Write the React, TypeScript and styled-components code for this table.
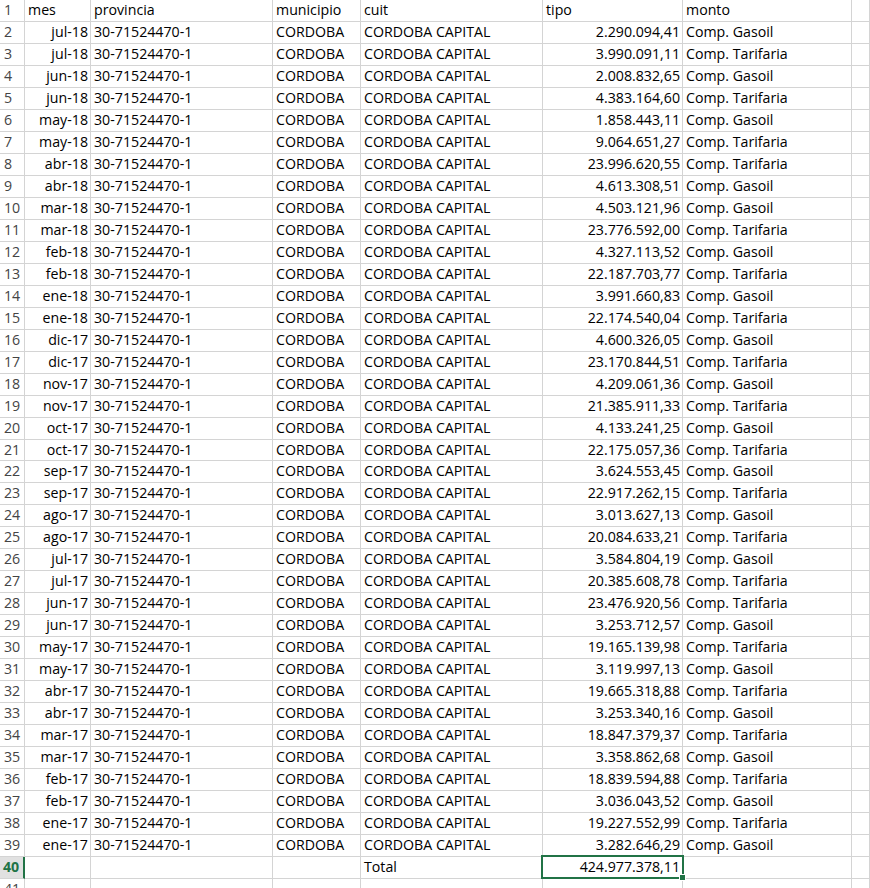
import React from "react";
import styled, { createGlobalStyle, css } from "styled-components";

const Global = createGlobalStyle`
  html, body { margin: 0; padding: 0; background: #fff; }
  body { width: 870px; height: 888px; overflow: hidden; }
`;

type Row = [string, string, string];

const rows: Row[] = [
  ["jul-18", "2.290.094,41", "Comp. Gasoil"],
  ["jul-18", "3.990.091,11", "Comp. Tarifaria"],
  ["jun-18", "2.008.832,65", "Comp. Gasoil"],
  ["jun-18", "4.383.164,60", "Comp. Tarifaria"],
  ["may-18", "1.858.443,11", "Comp. Gasoil"],
  ["may-18", "9.064.651,27", "Comp. Tarifaria"],
  ["abr-18", "23.996.620,55", "Comp. Tarifaria"],
  ["abr-18", "4.613.308,51", "Comp. Gasoil"],
  ["mar-18", "4.503.121,96", "Comp. Gasoil"],
  ["mar-18", "23.776.592,00", "Comp. Tarifaria"],
  ["feb-18", "4.327.113,52", "Comp. Gasoil"],
  ["feb-18", "22.187.703,77", "Comp. Tarifaria"],
  ["ene-18", "3.991.660,83", "Comp. Gasoil"],
  ["ene-18", "22.174.540,04", "Comp. Tarifaria"],
  ["dic-17", "4.600.326,05", "Comp. Gasoil"],
  ["dic-17", "23.170.844,51", "Comp. Tarifaria"],
  ["nov-17", "4.209.061,36", "Comp. Gasoil"],
  ["nov-17", "21.385.911,33", "Comp. Tarifaria"],
  ["oct-17", "4.133.241,25", "Comp. Gasoil"],
  ["oct-17", "22.175.057,36", "Comp. Tarifaria"],
  ["sep-17", "3.624.553,45", "Comp. Gasoil"],
  ["sep-17", "22.917.262,15", "Comp. Tarifaria"],
  ["ago-17", "3.013.627,13", "Comp. Gasoil"],
  ["ago-17", "20.084.633,21", "Comp. Tarifaria"],
  ["jul-17", "3.584.804,19", "Comp. Gasoil"],
  ["jul-17", "20.385.608,78", "Comp. Tarifaria"],
  ["jun-17", "23.476.920,56", "Comp. Tarifaria"],
  ["jun-17", "3.253.712,57", "Comp. Gasoil"],
  ["may-17", "19.165.139,98", "Comp. Tarifaria"],
  ["may-17", "3.119.997,13", "Comp. Gasoil"],
  ["abr-17", "19.665.318,88", "Comp. Tarifaria"],
  ["abr-17", "3.253.340,16", "Comp. Gasoil"],
  ["mar-17", "18.847.379,37", "Comp. Tarifaria"],
  ["mar-17", "3.358.862,68", "Comp. Gasoil"],
  ["feb-17", "18.839.594,88", "Comp. Tarifaria"],
  ["feb-17", "3.036.043,52", "Comp. Gasoil"],
  ["ene-17", "19.227.552,99", "Comp. Tarifaria"],
  ["ene-17", "3.282.646,29", "Comp. Gasoil"],
];

const GRID = "#d4d4d4";
const GREEN = "#217346";

const Sheet = styled.div`
  display: grid;
  grid-template-columns: 25px 66px 182px 88px 182px 140px 169px 1fr;
  grid-template-rows: repeat(20, 22px) 21px repeat(20, 22px);
  width: 870px;
  height: 888px;
  overflow: hidden;
  font-family: "Open Sans", "Noto Sans", sans-serif;
  font-size: 14.2px;
  line-height: 20px;
  color: #000;
`;

const Cell = styled.div<{ $align?: "left" | "right" }>`
  box-sizing: border-box;
  border-right: 1px solid ${GRID};
  border-bottom: 1px solid ${GRID};
  padding: 0 2px 1px 3px;
  display: flex;
  align-items: center;
  justify-content: ${(p) => (p.$align === "right" ? "flex-end" : "flex-start")};
  white-space: nowrap;
  position: relative;
`;

const RowHeader = styled.div<{ $active?: boolean }>`
  box-sizing: border-box;
  border-right: 1px solid ${GRID};
  border-bottom: 1px solid ${GRID};
  padding: 0 0 1px 4px;
  display: flex;
  align-items: center;
  color: #444;
  white-space: nowrap;
  ${(p) =>
    p.$active &&
    css`
      background: #e1e1e1;
      color: ${GREEN};
      font-weight: 700;
      padding-left: 3px;
      border-right: 2px solid ${GREEN};
    `}
`;

const Selection = styled.div`
  position: absolute;
  left: -2px;
  top: -2px;
  width: 143px;
  height: 24px;
  box-sizing: border-box;
  border: 2px solid ${GREEN};
  z-index: 2;
  pointer-events: none;
`;

const FillHandle = styled.div`
  position: absolute;
  right: -4px;
  bottom: -4px;
  width: 7px;
  height: 7px;
  box-sizing: border-box;
  background: ${GREEN};
  border: 1px solid #fff;
`;

const CellText = styled.span`
  position: relative;
  z-index: 3;
`;

export default function App() {
  return (
    <>
      <Global />
      <Sheet>
        <RowHeader>1</RowHeader>
        <Cell>mes</Cell>
        <Cell>provincia</Cell>
        <Cell>municipio</Cell>
        <Cell>cuit</Cell>
        <Cell>tipo</Cell>
        <Cell>monto</Cell>
        <Cell />
        {rows.map((r, i) => (
          <React.Fragment key={i}>
            <RowHeader>{i + 2}</RowHeader>
            <Cell $align="right">{r[0]}</Cell>
            <Cell>30-71524470-1</Cell>
            <Cell>CORDOBA</Cell>
            <Cell>CORDOBA CAPITAL</Cell>
            <Cell $align="right">{r[1]}</Cell>
            <Cell>{r[2]}</Cell>
            <Cell />
          </React.Fragment>
        ))}
        <RowHeader $active>40</RowHeader>
        <Cell />
        <Cell />
        <Cell />
        <Cell>Total</Cell>
        <Cell $align="right">
          <CellText>424.977.378,11</CellText>
          <Selection>
            <FillHandle />
          </Selection>
        </Cell>
        <Cell />
        <Cell />
        <RowHeader>41</RowHeader>
        <Cell />
        <Cell />
        <Cell />
        <Cell />
        <Cell />
        <Cell />
        <Cell />
      </Sheet>
    </>
  );
}
